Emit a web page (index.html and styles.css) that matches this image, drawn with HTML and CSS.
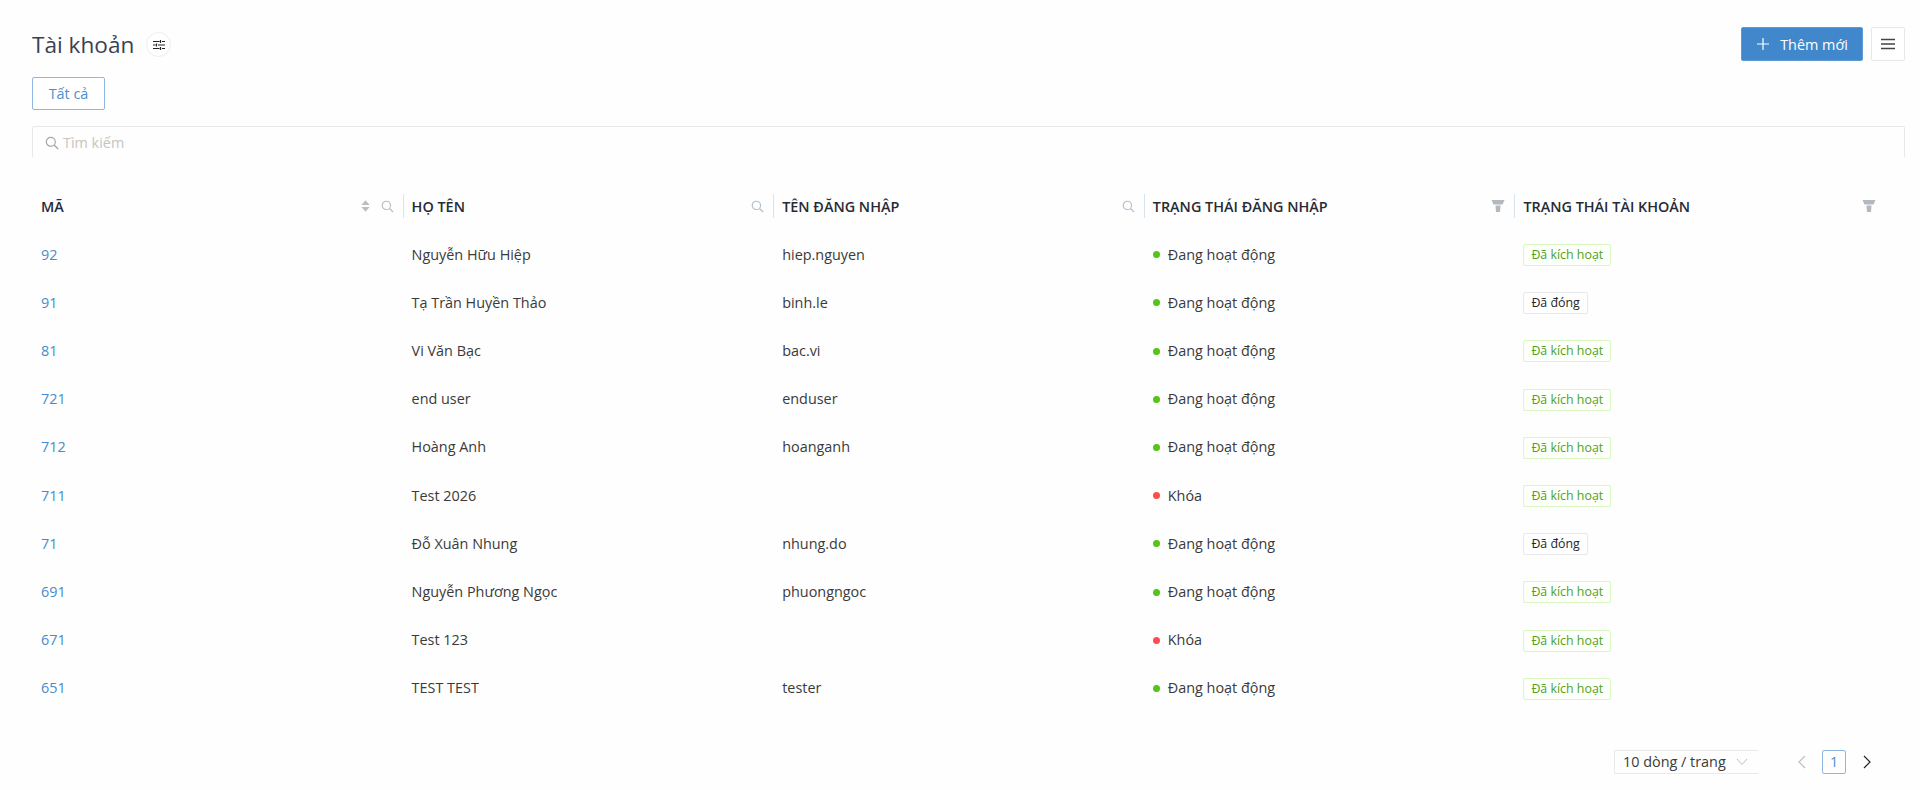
FILE: index.html
```html
<!DOCTYPE html>
<html lang="en">
<head>
    <meta charset="UTF-8">
    <title>Tài khoản</title>
    <link rel="stylesheet" href="styles.css">
</head>
<body>
    <svg class="icon-defs" width="0" height="0">
        <symbol id="i-search" viewBox="0 0 14 14"><circle cx="5.8" cy="5.8" r="4.5" fill="none" stroke="currentColor" stroke-width="1.2"/><path d="M9.1 9.1l4 4" fill="none" stroke="currentColor" stroke-width="1.4"/></symbol>
        <symbol id="i-sort" viewBox="0 0 10 14"><path d="M5 0.5l4.5 5.5H0.5zM5 13.5L0.5 8h9z" fill="currentColor"/></symbol>
        <symbol id="i-filter" viewBox="0 0 14 14"><path d="M0.5 1h13l-2 4.5h-9zM4.5 6.5h5l-.5 6.5h-4z" fill="currentColor"/></symbol>
    </svg>
    <div class="page">
        <div class="page-head">
            <div class="title-wrap">
                <h1 class="title">Tài khoản</h1>
                <button class="settings-btn">
                    <svg width="12" height="12" viewBox="0 0 12 12"><path d="M0 2.5h6.5M9 2.5h3M0 6h2.5M5 6h7M0 9.5h6.5M9 9.5h3M7.5 1v3M3.5 4.5v3M7.5 8v3" fill="none" stroke="#222" stroke-width="1.2"/></svg>
                </button>
            </div>
            <div class="actions">
                <button class="btn-add">
                    <svg width="14" height="14" viewBox="0 0 14 14"><path d="M7 1v12M1 7h12" fill="none" stroke="#fff" stroke-width="1.2"/></svg>
                    Thêm mới
                </button>
                <button class="btn-menu">
                    <svg width="16" height="12" viewBox="0 0 16 12"><path d="M1 1.5h14M1 6h14M1 10.5h14" fill="none" stroke="#444" stroke-width="1.3"/></svg>
                </button>
            </div>
        </div>

        <button class="tab-all">Tất cả</button>

        <div class="search-box">
            <svg class="search-icon" width="14" height="14"><use href="#i-search"/></svg>
            <span class="placeholder">Tìm kiếm</span>
        </div>

        <table class="data-table">
            <thead>
                <tr>
                    <th><div class="th-in">MÃ<span class="th-icons"><svg class="ic-sort" width="9" height="14"><use href="#i-sort"/></svg><svg class="ic-search" width="13" height="13"><use href="#i-search"/></svg></span></div></th>
                    <th><div class="th-in">HỌ TÊN<span class="th-icons"><svg class="ic-search" width="13" height="13"><use href="#i-search"/></svg></span></div></th>
                    <th><div class="th-in">TÊN ĐĂNG NHẬP<span class="th-icons"><svg class="ic-search" width="13" height="13"><use href="#i-search"/></svg></span></div></th>
                    <th><div class="th-in">TRẠNG THÁI ĐĂNG NHẬP<span class="th-icons"><svg class="ic-filter" width="14" height="14"><use href="#i-filter"/></svg></span></div></th>
                    <th><div class="th-in">TRẠNG THÁI TÀI KHOẢN<span class="th-icons"><svg class="ic-filter" width="14" height="14"><use href="#i-filter"/></svg></span></div></th>
                </tr>
            </thead>
            <tbody>
                <tr><td><a class="code">92</a></td><td>Nguyễn Hữu Hiệp</td><td>hiep.nguyen</td><td><i class="dot on"></i>Đang hoạt động</td><td><span class="tag active">Đã kích hoạt</span></td></tr>
                <tr><td><a class="code">91</a></td><td>Tạ Trần Huyền Thảo</td><td>binh.le</td><td><i class="dot on"></i>Đang hoạt động</td><td><span class="tag">Đã đóng</span></td></tr>
                <tr><td><a class="code">81</a></td><td>Vi Văn Bạc</td><td>bac.vi</td><td><i class="dot on"></i>Đang hoạt động</td><td><span class="tag active">Đã kích hoạt</span></td></tr>
                <tr><td><a class="code">721</a></td><td>end user</td><td>enduser</td><td><i class="dot on"></i>Đang hoạt động</td><td><span class="tag active">Đã kích hoạt</span></td></tr>
                <tr><td><a class="code">712</a></td><td>Hoàng Anh</td><td>hoanganh</td><td><i class="dot on"></i>Đang hoạt động</td><td><span class="tag active">Đã kích hoạt</span></td></tr>
                <tr><td><a class="code">711</a></td><td>Test 2026</td><td></td><td><i class="dot off"></i>Khóa</td><td><span class="tag active">Đã kích hoạt</span></td></tr>
                <tr><td><a class="code">71</a></td><td>Đỗ Xuân Nhung</td><td>nhung.do</td><td><i class="dot on"></i>Đang hoạt động</td><td><span class="tag">Đã đóng</span></td></tr>
                <tr><td><a class="code">691</a></td><td>Nguyễn Phương Ngọc</td><td>phuongngoc</td><td><i class="dot on"></i>Đang hoạt động</td><td><span class="tag active">Đã kích hoạt</span></td></tr>
                <tr><td><a class="code">671</a></td><td>Test 123</td><td></td><td><i class="dot off"></i>Khóa</td><td><span class="tag active">Đã kích hoạt</span></td></tr>
                <tr><td><a class="code">651</a></td><td>TEST TEST</td><td>tester</td><td><i class="dot on"></i>Đang hoạt động</td><td><span class="tag active">Đã kích hoạt</span></td></tr>
            </tbody>
        </table>

        <div class="pager">
            <div class="page-size">10 dòng / trang
                <svg width="12" height="8" viewBox="0 0 12 8"><path d="M1 1l5 5.5L11 1" fill="none" stroke="#bfbfbf" stroke-width="1"/></svg>
            </div>
            <svg class="arrow" width="10" height="14" viewBox="0 0 10 14"><path d="M8 1L2 7l6 6" fill="none" stroke="#bfbfbf" stroke-width="1.2"/></svg>
            <span class="page-num">1</span>
            <svg class="arrow next" width="10" height="14" viewBox="0 0 10 14"><path d="M2 1l6 6-6 6" fill="none" stroke="#262626" stroke-width="1.2"/></svg>
        </div>
    </div>
</body>
</html>
```

FILE: styles.css
```css
* {
    box-sizing: border-box;
}

body {
    margin: 0;
    background-color: #fefefe;
    color: #262626;
    font-family: "Open Sans", Arial, sans-serif;
    font-size: 14.4px;
}

button {
    font-family: inherit;
    padding: 0;
    cursor: pointer;
}

.icon-defs {
    position: absolute;
}

.page {
    padding: 27px 15px 0 32px;
}

.page-head {
    display: flex;
    justify-content: space-between;
    align-items: center;
    height: 34px;
}

.title-wrap {
    display: flex;
    align-items: center;
    gap: 12px;
    margin-top: 1px;
}

.title {
    margin: 0;
    font-size: 22.6px;
    font-weight: 400;
    line-height: 34px;
    color: #3a4252;
}

.settings-btn {
    display: flex;
    align-items: center;
    justify-content: center;
    width: 25px;
    height: 25px;
    background: #fff;
    border: 1px solid #eee;
    border-radius: 50%;
}

.actions {
    display: flex;
    gap: 8px;
}

.btn-add {
    display: flex;
    align-items: center;
    justify-content: center;
    gap: 10px;
    width: 122px;
    height: 34px;
    background-color: #4087cb;
    border: 1px solid #5c9ad6;
    border-radius: 2px;
    color: #fff;
    font-size: 14.4px;
}

.btn-menu {
    display: flex;
    align-items: center;
    justify-content: center;
    width: 34px;
    height: 34px;
    background: #fff;
    border: 1px solid #e8e8e8;
    border-radius: 2px;
}

.tab-all {
    display: block;
    width: 73px;
    height: 33px;
    margin-top: 16px;
    background: #fff;
    border: 1px solid #8db7e0;
    border-radius: 2px;
    color: #4a8fd0;
    font-size: 14.4px;
}

.search-box {
    display: flex;
    align-items: center;
    gap: 4px;
    height: 32px;
    margin-top: 16px;
    padding-left: 12px;
    border: 1px solid #e8e8e8;
    border-bottom: none;
    border-radius: 2px;
}

.search-icon {
    color: #a8a8a8;
}

.placeholder {
    color: #c8c4c0;
}

.data-table {
    width: 1853px;
    margin-top: 24px;
    border-collapse: collapse;
    table-layout: fixed;
}

.data-table th {
    padding: 0;
    height: 48px;
    font-weight: 600;
    text-align: left;
    color: #262b35;
}

.th-in {
    display: flex;
    justify-content: space-between;
    align-items: center;
    height: 24px;
    padding: 0 8px;
    border-left: 1px solid #d9e3ec;
}

.data-table th:first-child .th-in {
    border-left: none;
    padding-left: 9px;
}

.th-icons {
    display: flex;
    align-items: center;
    gap: 11px;
    margin-right: 1px;
}

.ic-sort {
    color: #b9bdc4;
}

.ic-search {
    color: #b4bdcb;
}

.ic-filter {
    color: #b4b8bf;
}

.data-table td {
    height: 48.2px;
    padding: 0 9px;
    color: #3a3a3a;
}

.code {
    color: #4a8bc9;
}

.dot {
    display: inline-block;
    width: 7px;
    height: 7px;
    margin: 0 8px 2px 0;
    border-radius: 50%;
    vertical-align: middle;
}

.dot.on {
    background-color: #52c41a;
}

.dot.off {
    background-color: #ff4d4f;
}

.tag {
    display: inline-block;
    padding: 0 7px;
    height: 22px;
    margin-top: 2px;
    background: #fff;
    border: 1px solid #e8e8e8;
    border-radius: 2px;
    font-size: 12.4px;
    line-height: 20px;
    color: #262626;
}

.tag.active {
    background: #fcfffa;
    border-color: #d9f7be;
    color: #52a01a;
}

.pager {
    display: flex;
    justify-content: flex-end;
    align-items: center;
    width: 1853px;
    height: 24px;
    margin-top: 38px;
    padding-right: 13px;
}

.page-size {
    display: flex;
    align-items: center;
    justify-content: space-between;
    width: 145px;
    height: 24px;
    padding: 0 11px 0 8px;
    border: 1px solid #eaeaea;
    border-right: none;
    border-radius: 2px;
    color: #3a3a3a;
}

.arrow {
    margin-left: 38px;
}

.page-num {
    width: 24px;
    height: 24px;
    margin-left: 15px;
    border: 1px solid #8db7e0;
    border-radius: 2px;
    color: #4a8fd0;
    line-height: 22px;
    text-align: center;
}

.arrow.next {
    margin-left: 16px;
}
```
